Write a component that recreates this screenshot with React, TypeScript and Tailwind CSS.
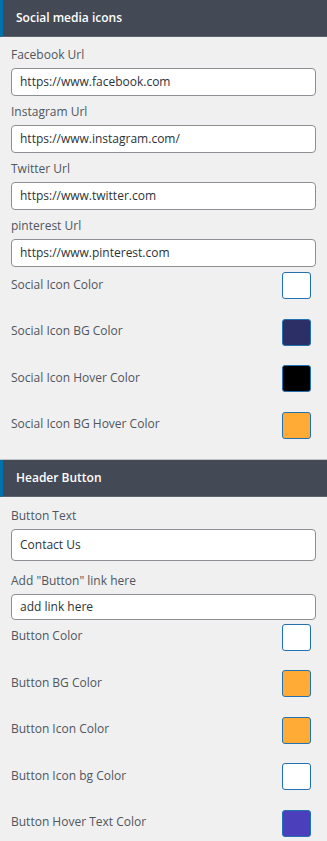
import React from 'react';

const font = { fontFamily: '"Open Sans", "Noto Sans", sans-serif' };

const SectionHeader = ({ title }: { title: string }) => (
  <div className="h-[37px] bg-[#434a55] border-l-[3px] border-[#0073aa] border-b border-b-[#5d646e] flex items-center pl-[13px]">
    <span className="text-white font-semibold text-[12px]">{title}</span>
  </div>
);

const Field = ({ label, value, h = 'h-[28px]', pt = 'pt-[7px]' }: { label: string; value: string; h?: string; pt?: string }) => (
  <div className="px-[11px]">
    <div className={`${pt} pb-[4px] leading-[18px] text-[12px] text-[#4f565d]`}>{label}</div>
    <div className={`${h} bg-white border border-[#8c8f94] rounded-[4px] flex items-center pl-[8px] text-[12px] text-[#2c3338]`}>
      {value}
    </div>
  </div>
);

const ColorRow = ({ label, color }: { label: string; color: string }) => (
  <div className="flex items-center justify-between pl-[11px] pr-[16px]">
    <span className="text-[12px] text-[#4f565d] -mt-[2px]">{label}</span>
    <div className="w-[29px] h-[27px] rounded-[3px] border border-[#2271b1]" style={{ backgroundColor: color }} />
  </div>
);

export default function App() {
  return (
    <div className="w-[327px] h-[841px] bg-[#f0f0f1] overflow-hidden" style={font}>
      <SectionHeader title="Social media icons" />
      <div className="pt-[2px]">
        <Field label="Facebook Url" value="https://www.facebook.com" />
        <Field label="Instagram Url" value="https://www.instagram.com/" />
        <Field label="Twitter Url" value="https://www.twitter.com" />
        <Field label="pinterest Url" value="https://www.pinterest.com" />
      </div>
      <div className="flex flex-col gap-[19.5px] pt-[5px]">
        <ColorRow label="Social Icon Color" color="#ffffff" />
        <ColorRow label="Social Icon BG Color" color="#2b2f66" />
        <ColorRow label="Social Icon Hover Color" color="#000000" />
        <ColorRow label="Social Icon BG Hover Color" color="#ffab36" />
      </div>
      <div className="mt-[20px] border-t border-[#c3c4c7]">
        <SectionHeader title="Header Button" />
      </div>
      <Field label="Button Text" value="Contact Us" h="h-[32px]" pt="pt-[10px]" />
      <Field label={'Add "Button" link here'} value="add link here" h="h-[26px]" pt="pt-[11px]" />
      <div className="flex flex-col gap-[19.5px] pt-[4px]">
        <ColorRow label="Button Color" color="#ffffff" />
        <ColorRow label="Button BG Color" color="#ffab36" />
        <ColorRow label="Button Icon Color" color="#ffab36" />
        <ColorRow label="Button Icon bg Color" color="#ffffff" />
        <ColorRow label="Button Hover Text Color" color="#4b3fbc" />
      </div>
    </div>
  );
}
